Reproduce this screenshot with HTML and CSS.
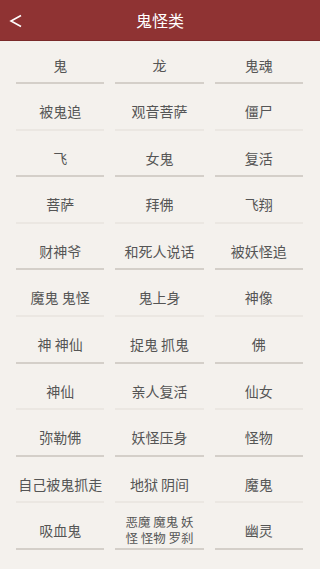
FILE: index.html
```html
<!DOCTYPE html>
<html lang="zh-CN">
<head>
<meta charset="utf-8">
<title>鬼怪类</title>
<link rel="stylesheet" href="styles.css">
</head>
<body>
<header class="bar">
  <span class="back"><svg width="14" height="14" viewBox="0 0 14 14"><path d="M12 1.5 L2 7 L12 12.5" fill="none" stroke="#fff" stroke-width="1.6" stroke-linejoin="miter"/></svg></span>
  <h1 class="title">鬼怪类</h1>
</header>
<main class="grid">
  <div class="cell">鬼</div><div class="cell">龙</div><div class="cell">鬼魂</div>
  <div class="cell faint">被鬼追</div><div class="cell faint">观音菩萨</div><div class="cell faint">僵尸</div>
  <div class="cell">飞</div><div class="cell">女鬼</div><div class="cell">复活</div>
  <div class="cell faint">菩萨</div><div class="cell faint">拜佛</div><div class="cell faint">飞翔</div>
  <div class="cell">财神爷</div><div class="cell">和死人说话</div><div class="cell">被妖怪追</div>
  <div class="cell faint">魔鬼 鬼怪</div><div class="cell faint">鬼上身</div><div class="cell faint">神像</div>
  <div class="cell">神 神仙</div><div class="cell">捉鬼 抓鬼</div><div class="cell">佛</div>
  <div class="cell faint">神仙</div><div class="cell faint">亲人复活</div><div class="cell faint">仙女</div>
  <div class="cell">弥勒佛</div><div class="cell">妖怪压身</div><div class="cell">怪物</div>
  <div class="cell faint">自己被鬼抓走</div><div class="cell faint">地狱 阴间</div><div class="cell faint">魔鬼</div>
  <div class="cell">吸血鬼</div><div class="cell small"><span>恶魔 魔鬼 妖<br>怪 怪物 罗刹</span></div><div class="cell">幽灵</div>
</main>
</body>
</html>
```
FILE: styles.css
```css
* { box-sizing: border-box; }
html, body { margin: 0; padding: 0; }
body {
  width: 320px;
  height: 569px;
  overflow: hidden;
  background: #f4f1ed;
  font-family: "Noto Sans CJK SC", "Noto Sans", sans-serif;
}
.bar {
  height: 41px;
  background: #8f3333;
  border-bottom: 1px solid #7a2a2a;
  display: flex;
  align-items: center;
  justify-content: center;
  position: relative;
}
.back {
  position: absolute;
  left: 9px;
  top: 14px;
  width: 14px;
  height: 14px;
  display: flex;
}
.title {
  margin: 0;
  color: #fff;
  font-size: 16px;
  font-weight: normal;
  line-height: 20px;
}
.grid {
  display: grid;
  grid-template-columns: repeat(3, 1fr);
  grid-auto-rows: 36px;
  column-gap: 11px;
  row-gap: 10.6px;
  padding: 7px 17px 0 16px;
}
.cell {
  display: flex;
  align-items: center;
  justify-content: center;
  text-align: center;
  color: #555;
  font-size: 14px;
  line-height: 16px;
  border-bottom: 2px solid #d4cfc9;
  padding-bottom: 1px;
}
.cell.faint {
  border-bottom-color: #ebe7e2;
}
.cell.small {
  font-size: 12.5px;
  line-height: 16px;
  white-space: nowrap;
}
```
